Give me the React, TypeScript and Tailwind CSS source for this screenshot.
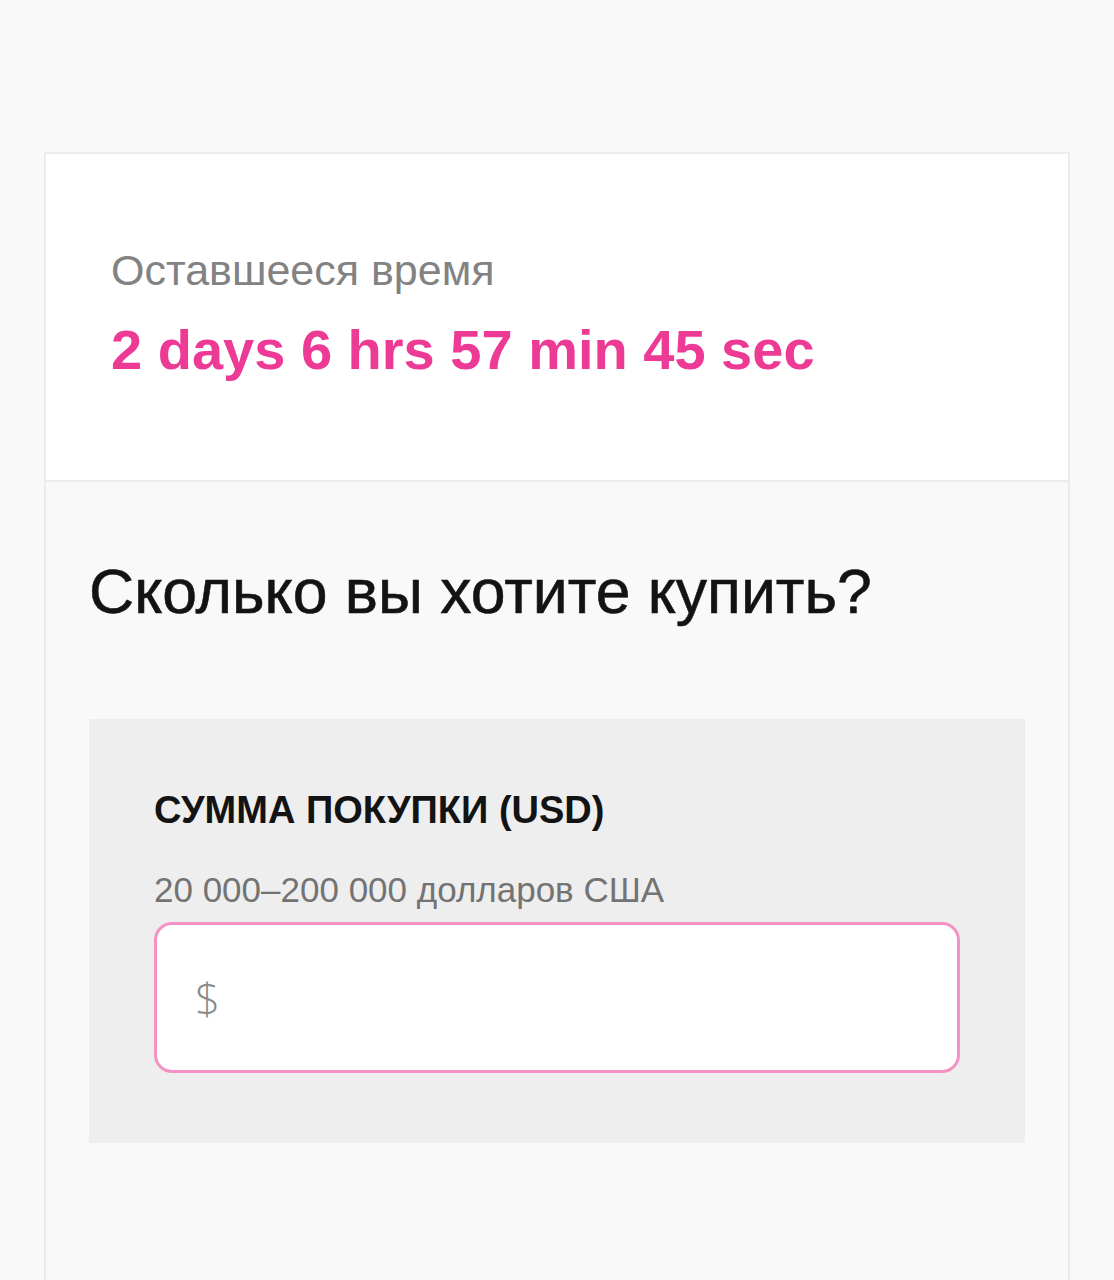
import React from "react";

export default function App() {
  return (
    <div
      className="min-h-[1280px] w-full bg-[#f9f9f9] pt-[152px] px-[44px]"
      style={{ fontFamily: '"Liberation Sans", Arial, sans-serif' }}
    >
      <div className="border-x-2 border-t-2 border-[#ececf0] min-h-[1128px] flex flex-col">
        <div className="bg-white h-[328px] pl-[65px] pt-[92px] border-b-2 border-[#ececf0]">
          <div className="text-[43px] leading-[48px] text-[#828282]">Оставшееся время</div>
          <div className="mt-[24px] text-[56px] leading-[64px] font-bold text-[#ec3a95]">
            2 days 6 hrs 57 min 45 sec
          </div>
        </div>
        <div className="bg-[#f9f9f9] px-[43px] pt-[73px]">
          <h2 className="text-[62.5px] leading-[72px] text-[#131313] [-webkit-text-stroke:0.6px_#131313]">
            Сколько вы хотите купить?
          </h2>
          <div className="mt-[92px] bg-[#eeeeef] px-[65px] pt-[69px] pb-[70px]">
            <div className="text-[38px] leading-[44px] font-bold text-[#131313]">СУММА ПОКУПКИ (USD)</div>
            <div className="mt-[38px] text-[35px] leading-[40px] text-[#737373]">
              20 000–200 000 долларов США
            </div>
            <div className="mt-[12px] h-[151px] bg-white border-[3px] border-[#f293c3] rounded-[18px] flex items-center pl-[38px]">
              <span
                className="text-[44px] font-light text-[#8a8a8a]"
                style={{ fontFamily: '"Open Sans", "Liberation Sans", sans-serif' }}
              >
                $
              </span>
            </div>
          </div>
        </div>
      </div>
    </div>
  );
}
